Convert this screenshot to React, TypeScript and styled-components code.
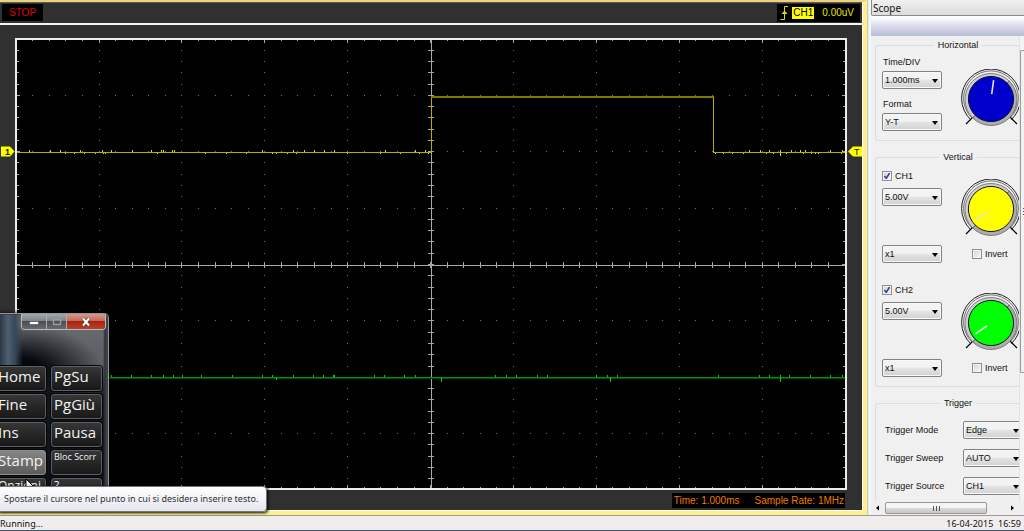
import React from 'react';
import styled, { createGlobalStyle } from 'styled-components';

const Global = createGlobalStyle`
  * { box-sizing: border-box; }
  body { margin: 0; background: #f0f0f0; overflow: hidden; }
`;

const arial = `"Liberation Sans", Arial, sans-serif`;
const segoe = `"Open Sans", "Segoe UI", sans-serif`;
const tahoma = `"Noto Sans", Tahoma, sans-serif`;

const Desktop = styled.div`
  position: relative;
  display: flex;
  flex-direction: column;
  height: 100vh;
  overflow: hidden;
  font-family: ${arial};
`;

const Main = styled.main`
  display: flex;
  flex: 1;
  min-height: 0;
`;

/* ---------- oscilloscope ---------- */

const Scope = styled.section`
  display: flex;
  flex-direction: column;
  flex: 1;
  min-width: 0;
  background: #303030;
  border: solid #fff08a;
  border-width: 2px 4px 4px 0;
  border-top-color: #ecd27e;
  box-shadow: inset -1px -1px 0 #fff, inset 0 1px 0 #5a5a5a;
`;

const Gutter = styled.div`
  flex: none;
  width: 4px;
  background: linear-gradient(90deg, #c9c9c4 0 1px, #e4ebf2 1px 2px, #f2f7fc 2px);
`;

const ScopeHeader = styled.header`
  display: flex;
  justify-content: space-between;
  align-items: center;
  height: 23px;
  margin-right: 1px;
  padding: 0 2px;
  border-bottom: 2px solid #f4f4f4;
  font-size: 10px;
`;

const StopBox = styled.div`
  padding: 0 7px;
  background: #000;
  color: #e00000;
  line-height: 17px;
`;

const TriggerBox = styled.div`
  display: flex;
  align-items: center;
  height: 18px;
  padding: 0 6px 0 3px;
  background: #000;
  color: #e6e600;
`;

const ChannelTag = styled.span`
  margin: 0 8px 0 3px;
  padding: 0 1px;
  background: #ffff00;
  color: #000;
  line-height: 12px;
`;

const PlotRow = styled.div`
  display: flex;
  flex: 1;
  min-height: 0;
  margin-top: 13px;
`;

const PlotGutter = styled.div<{ $width: number }>`
  position: relative;
  flex: none;
  width: ${(p) => p.$width}px;
`;

const Flag = styled.svg`
  position: absolute;
  top: 24%;
  left: 1px;
  width: 14px;
  height: 11px;
`;

const Plot = styled.div`
  flex: 1;
  min-width: 0;
  border: 2px solid #ececec;
  background: #000;
  svg { display: block; width: 100%; height: 100%; }
`;

const ScopeFooter = styled.footer`
  display: flex;
  justify-content: flex-end;
  align-items: flex-start;
  height: 21px;
  padding: 3px 18px 0 0;
`;

const Readout = styled.div`
  display: flex;
  gap: 15px;
  padding: 0 1px 0 2px;
  background: #000;
  color: #f07800;
  font-size: 10px;
  line-height: 15px;
`;

/* ---------- control panel ---------- */

const Side = styled.aside`
  display: flex;
  flex-direction: column;
  flex: none;
  width: 153px;
  overflow: hidden;
  background: #f0f0f0;
  font-size: 9px;
  color: #101010;
`;

const ModeSelect = styled.select`
  appearance: none;
  flex: none;
  width: 160px;
  height: 16px;
  padding: 0 1px;
  border: 1px solid #8a8a8a;
  border-top: 0;
  border-radius: 0 0 2px 2px;
  background: linear-gradient(#f0f0f0, #dcdcdc);
  color: #101010;
  font: 10px/14px ${tahoma};
`;

const Band = styled.div`
  flex: none;
  height: 20px;
  background: linear-gradient(#fafbfd 0 3px, #e8eaf3 6px, #b9bdd6);
`;

const PanelRow = styled.div`
  display: flex;
  flex: 1;
  min-height: 0;
`;

const PanelView = styled.div`
  flex: 1;
  min-width: 0;
  overflow: hidden;
  padding: 3px 0 0 4px;
`;

const Group = styled.fieldset`
  width: 166px;
  margin: 0 0 10px;
  padding: 5px 6px 9px;
  border: 1px solid #d5dfe5;
  border-radius: 3px;
`;

const Legend = styled.legend`
  margin: 0 auto;
  padding: 0 4px;
  line-height: 12px;
`;

const Row = styled.div<{ $gap: number }>`
  display: flex;
  align-items: center;
  gap: ${(p) => p.$gap}px;
`;

const Stack = styled.div`
  display: flex;
  flex-direction: column;
  flex: none;
  width: 60px;
`;

const Caption = styled.label`
  padding: 0 1px;
  line-height: 12px;
`;

const SelectBox = styled.span`
  position: relative;
  display: block;
  flex: none;
  width: 60px;
  height: 18px;
  &::after {
    content: '';
    position: absolute;
    right: 4px;
    top: 8px;
    border: solid transparent;
    border-width: 4px 3px 0;
    border-top-color: #000;
    pointer-events: none;
  }
`;

const NativeSelect = styled.select`
  appearance: none;
  display: block;
  width: 100%;
  height: 100%;
  padding: 0 2px;
  border: 1px solid #828282;
  border-radius: 2px;
  background: linear-gradient(#f3f3f3 0 45%, #e4e4e4 50%, #d2d2d2);
  box-shadow: inset 0 0 0 1px #f8f8f8;
  color: #101010;
  font: 9px ${arial};
`;

const CaptionedSelect = styled.div`
  display: flex;
  flex-direction: column;
  gap: 3px;
  & + & { margin-top: 9px; }
`;

const CheckLabel = styled.label`
  display: flex;
  align-items: center;
  gap: 3px;
  height: 12px;
`;

const CheckBox = styled.input`
  appearance: none;
  width: 10px;
  height: 10px;
  margin: 0;
  border: 1px solid #8c8f94;
  background: linear-gradient(135deg, #cdd3da, #f8f9fa);
  box-shadow: inset 0 0 0 1px #f2f2f2;
  &:checked {
    background: url("data:image/svg+xml,%3Csvg xmlns='http://www.w3.org/2000/svg' viewBox='0 0 8 8'%3E%3Cpath d='M1.4 4 L3.2 6.4 L6.6 1' fill='none' stroke='%23303f8f' stroke-width='1.5'/%3E%3C/svg%3E"),
      linear-gradient(135deg, #cdd3da, #f8f9fa);
  }
`;

const Channel = styled.div`
  padding-top: 2px;
  & + & { padding-top: 21px; }
`;

const ChannelTop = styled.div`
  display: flex;
  gap: 18px;
  margin-bottom: 6px;
`;

const ChannelControls = styled.div`
  display: flex;
  flex-direction: column;
  gap: 6px;
  width: 60px;
`;

const KnobSvg = styled.svg<{ $top: number }>`
  flex: none;
  width: 62px;
  height: 60px;
  margin-top: ${(p) => p.$top}px;
`;

const TriggerList = styled.div`
  display: flex;
  flex-direction: column;
  gap: 10px;
  padding: 7px 0 10px 3px;
`;

const TriggerRow = styled.div`
  display: flex;
  align-items: center;
`;

const TriggerLabel = styled.label`
  flex: none;
  width: 78px;
`;

const VScroll = styled.div`
  flex: none;
  width: 5px;
  padding-top: 14px;
  border-left: 1px solid #e2e2e2;
  background: #f4f4f4;
`;

const VThumb = styled.div`
  display: flex;
  align-items: center;
  height: 323px;
  border: 1px solid #9a9a9a;
  border-right: 0;
  border-radius: 2px 0 0 2px;
  background: #f2f2f2;
  &::after {
    content: '';
    width: 2px;
    height: 7px;
    margin-left: 2px;
    background: repeating-linear-gradient(#555 0 1px, transparent 1px 3px);
  }
`;

const HScroll = styled.div`
  display: flex;
  align-items: center;
  flex: none;
  height: 14px;
  padding: 0 9px 0 4px;
  gap: 5px;
  background: #efefef;
  svg { width: 5px; height: 6px; }
  svg:last-child { margin-left: auto; }
`;

const HThumb = styled.div`
  display: flex;
  justify-content: center;
  align-items: center;
  width: 102px;
  height: 12px;
  border: 1px solid #979797;
  border-radius: 2px;
  background: linear-gradient(#f6f6f6 0 45%, #dadada 50%, #c8c8c8);
  &::after {
    content: '';
    width: 7px;
    height: 5px;
    background: repeating-linear-gradient(90deg, #555 0 1px, transparent 1px 3px);
  }
`;

/* ---------- status bar ---------- */

const StatusBar = styled.footer`
  display: flex;
  justify-content: space-between;
  flex: none;
  height: 16px;
  padding: 0 3px 0 0;
  border-top: 1px solid #9a9a9a;
  border-bottom: 1px solid #40566e;
  background: #f1edec;
  color: #101010;
  font: 9px/16px ${tahoma};
  white-space: pre;
`;

/* ---------- on-screen keyboard ---------- */

const KeyboardWindow = styled.section`
  position: absolute;
  left: 0;
  bottom: 22px;
  width: 109px;
  height: 196px;
  overflow: hidden;
  border: 1px solid #8f9499;
  border-left: 0;
  border-radius: 0 5px 0 0;
  box-shadow: 0 0 4px #000, inset -1px 1px 0 #3c4146;
  background:
    linear-gradient(90deg, #2b3745 0, #4d5f70 8px, #35485a 15px, rgba(20, 28, 38, 0) 23px) 0 0 / 24px 52px no-repeat,
    linear-gradient(90deg, rgba(0, 0, 0, 0) 103px, #2c3136 105px, #50565b 108px),
    radial-gradient(ellipse 80px 45px at 22px 56px, #05080c 25%, rgba(10, 14, 18, 0) 100%),
    linear-gradient(#6a6e72 0, #5b5f63 50px, #15191e 85px, #0a0f16);
`;

const TitleButtons = styled.div`
  display: flex;
  width: 85px;
  height: 16px;
  margin-left: 21px;
  border: 1px solid #b8bcc0;
  border-top: 0;
  border-radius: 0 0 4px 4px;
  overflow: hidden;
`;

const TitleButton = styled.button<{ $width: number; $close?: boolean }>`
  display: flex;
  justify-content: center;
  align-items: center;
  width: ${(p) => p.$width}px;
  padding: 0;
  border: 0;
  border-left: ${(p) => (p.$width === 24 ? '0' : '1px solid #a8acb0')};
  background: ${(p) =>
    p.$close
      ? 'linear-gradient(#d59a8c, #c46a58 45%, #a82411 50%, #b8402a)'
      : 'linear-gradient(#a4a7aa, #808488 45%, #4a4e52 50%, #666a6e)'};
  svg { width: 12px; height: 10px; }
`;

const Keys = styled.div`
  display: grid;
  grid-template-columns: 51px 51px;
  gap: 3px 5px;
  margin: 36px 0 0 -5px;
`;

const keyText = {
  large: 'font-size: 15px; line-height: 18px;',
  medium: 'font-size: 12px; line-height: 14px;',
  small: 'font-size: 9px; line-height: 12px;',
};

const Key = styled.button<{ $size: keyof typeof keyText; $lit: boolean }>`
  display: flex;
  align-items: flex-start;
  height: 25px;
  padding: 0 0 0 2px;
  border: 1px solid ${(p) => (p.$lit ? '#8e8e8e' : '#5c5f62')};
  border-radius: 3px;
  background: ${(p) =>
    p.$lit ? 'linear-gradient(#858585, #5c5c5c)' : 'linear-gradient(#363636, #262626 50%, #191919)'};
  box-shadow: 0 0 0 1px #05070a;
  color: #f2f2f2;
  font-family: ${segoe};
  ${(p) => keyText[p.$size]}
  white-space: nowrap;
`;

const Cursor = styled.svg`
  position: absolute;
  left: 25px;
  bottom: 35px;
  width: 12px;
  height: 18px;
`;

const Tooltip = styled.div`
  position: absolute;
  left: -4px;
  bottom: 19px;
  padding: 0 8px 0 7px;
  border: 1px solid #767676;
  border-radius: 4px;
  background: linear-gradient(#ffffff, #e4e5f0);
  box-shadow: 1px 1px 3px #000;
  color: #303030;
  font: 9px/24px ${tahoma};
  white-space: nowrap;
`;

/* ---------- pieces ---------- */

const X0 = 16.6;
const Y0 = 39.4;
const DX = 82.9;
const DY = 56.4;
const range = (n: number) => Array.from({ length: n }, (_, i) => i);

const YELLOW_UP = [29, 50, 60, 80, 102, 111, 132, 151, 161, 163, 172, 174, 262, 293, 304, 314, 324, 334, 385, 415, 425,
  749, 760, 769, 780, 791, 800, 805, 830, 842];
const YELLOW_DOWN = [65, 74, 84, 95, 103, 105, 157, 205, 226, 246, 272, 276, 287, 296, 347, 380, 400, 419, 428, 715, 723,
  732, 743, 766, 773, 780, 786, 803, 811, 815, 818, 841];
const GREEN_UP = [111, 131, 151, 163, 173, 182, 201, 232, 262, 272, 293, 313, 323, 333, 334, 374, 384, 404, 415, 495, 506,
  516, 537, 547, 596, 607, 617, 718, 759, 769, 780, 789, 810, 830, 842];
const GREEN_DOWN = [[276, 2], [441, 4], [610, 4], [780, 4]];

function Graticule() {
  return (
    <svg viewBox="17 40 828 448" preserveAspectRatio="none" role="img" aria-label="Waveforms of channel 1 and channel 2">
      <g fill="#707070">
        {range(9).map((c) =>
          range(39).map((r) => (
            <rect key={`v${c}-${r}`} x={Math.round(X0 + DX * (c + 1)) - 1} y={Math.round(Y0 + (DY / 5) * (r + 1)) - 1} width="1" height="1" />
          )),
        )}
        {range(7).map((r) =>
          range(49).map((c) => (
            <rect key={`h${r}-${c}`} x={Math.round(X0 + (DX / 5) * (c + 1)) - 1} y={Math.round(Y0 + DY * (r + 1)) - 1} width="1" height="1" />
          )),
        )}
      </g>
      <g fill="#a8a8a8">
        {range(49).map((c) => {
          const x = Math.round(X0 + (DX / 5) * (c + 1)) - 1;
          const len = (c + 1) % 5 === 0 ? 3 : 1;
          return (
            <React.Fragment key={c}>
              <rect x={x} y={40} width="1" height={len} />
              <rect x={x} y={488 - len} width="1" height={len} />
              <rect x={x} y={262} width="1" height="6" />
            </React.Fragment>
          );
        })}
        {range(39).map((r) => {
          const y = Math.round(Y0 + (DY / 5) * (r + 1)) - 1;
          const len = (r + 1) % 5 === 0 ? 3 : 2;
          return (
            <React.Fragment key={r}>
              <rect x={17} y={y} width={len} height="1" />
              <rect x={845 - len} y={y} width={len} height="1" />
              <rect x={428} y={y} width="6" height="1" />
            </React.Fragment>
          );
        })}
        <rect x={431} y={40} width="1" height="448" />
        <rect x={17} y={265} width="828" height="1" />
      </g>
      <g fill="#b4b000">
        <rect x={17} y={152} width="415" height="1" />
        <rect x={431} y={97} width="1" height="56" />
        <rect x={431} y={96} width="283" height="2" fill="#7d7800" />
        <rect x={713} y={97} width="1" height="56" />
        <rect x={713} y={152} width="132" height="1" />
      </g>
      <g fill="#e0dc00">
        {YELLOW_UP.map((x) => <rect key={x} x={x} y={150} width="1" height="2" />)}
        {YELLOW_DOWN.map((x) => <rect key={x} x={x} y={153} width="1" height={x === 780 ? 3 : 1} />)}
      </g>
      <rect x={17} y={377} width="828" height="1" fill="#009800" />
      <rect x={17} y={378} width="828" height="1" fill="#004a00" />
      <g fill="#00d800">
        {GREEN_UP.map((x) => <rect key={x} x={x} y={375} width="1" height="2" />)}
        {GREEN_DOWN.map(([x, h]) => <rect key={x} x={x} y={378} width="1" height={h} />)}
      </g>
    </svg>
  );
}

function Knob({ color, angle, top = 0 }: { color: string; angle: number; top?: number }) {
  return (
    <KnobSvg $top={top} viewBox="0 0 62 60" aria-hidden="true">
      <g fill="none" stroke="#202020">
        <path d="M10.5 50.5 A29.4 29.4 0 1 1 51.5 50.5" />
        <path d="M12 49 A27.4 27.4 0 1 1 50 49" stroke="#505050" strokeWidth="0.8" />
        <path d="M6 55 L13 48 M57 55 L50 48" stroke="#000" strokeWidth="1.2" />
      </g>
      <circle cx="31" cy="30.5" r="26" fill="#cfcfcf" />
      <path d="M49.4 12.1 A26 26 0 0 1 12.6 48.9 Z" fill="#adadad" />
      <circle cx="31" cy="30.5" r="26" fill="none" stroke="#666" strokeWidth="0.8" />
      <path d="M45 16 L49.4 12.1 M17 45 L12.6 48.9" stroke="#333" strokeWidth="0.8" />
      <circle cx="31" cy="30" r="22.6" fill={color} stroke="#101030" />
      <path d="M31 25 V11" transform={`rotate(${angle} 31 30)`} stroke="#e4e4e4" strokeWidth="1.6" />
    </KnobSvg>
  );
}

function Select({ id, value, label }: { id: string; value: string; label?: string }) {
  return (
    <SelectBox>
      <NativeSelect id={id} aria-label={label} defaultValue={value}>
        <option>{value}</option>
      </NativeSelect>
    </SelectBox>
  );
}

function ChannelBlock({ name, color }: { name: string; color: string }) {
  return (
    <Channel>
      <ChannelTop>
        <ChannelControls>
          <CheckLabel>
            <CheckBox type="checkbox" defaultChecked />
            {name}
          </CheckLabel>
          <Select id={`${name}-volts`} value="5.00V" label={`${name} volts per division`} />
        </ChannelControls>
        <Knob color={color} angle={235} top={9} />
      </ChannelTop>
      <Row $gap={30}>
        <Select id={`${name}-probe`} value="x1" label={`${name} probe`} />
        <CheckLabel>
          <CheckBox type="checkbox" />
          Invert
        </CheckLabel>
      </Row>
    </Channel>
  );
}

const KEYS = ['Home', 'PgSu', 'Fine', 'PgGiù', 'Ins', 'Pausa', 'Stamp', 'Bloc Scorr', 'Opzioni', '?'];
const keySize = (k: string) => (k === 'Bloc Scorr' ? 'small' : k === 'Opzioni' || k === '?' ? 'medium' : 'large');

const TRIGGERS = [
  ['Trigger Mode', 'Edge'],
  ['Trigger Sweep', 'AUTO'],
  ['Trigger Source', 'CH1'],
];

export default function App() {
  return (
    <Desktop>
      <Global />
      <Main>
        <Scope>
          <ScopeHeader>
            <StopBox>STOP</StopBox>
            <TriggerBox>
              <svg width="9" height="14" viewBox="0 0 9 14" fill="none" stroke="#d8d820" aria-hidden="true">
                <path d="M0.5 13.5 H4.5 V0.5 H8" />
                <path d="M1.5 8 L4.5 4.5 L7.5 8 Z" fill="#d8d820" stroke="none" />
              </svg>
              <ChannelTag>CH1</ChannelTag>
              0.00uV
            </TriggerBox>
          </ScopeHeader>
          <PlotRow>
            <PlotGutter $width={15}>
              <Flag viewBox="0 0 14 11">
                <path d="M0 0.5 H9 L13.5 5.5 L9 10.5 H0 Z" fill="#ffff00" />
                <text x="4" y="9" fontSize="9" fontWeight="700" fill="#202000">1</text>
              </Flag>
            </PlotGutter>
            <Plot>
              <Graticule />
            </Plot>
            <PlotGutter $width={16}>
              <Flag viewBox="0 0 14 11">
                <path d="M14 0.5 H5 L0 5.5 L5 10.5 H14 Z" fill="#ffff00" />
                <text x="6" y="9" fontSize="9" fill="#202000">T</text>
              </Flag>
            </PlotGutter>
          </PlotRow>
          <ScopeFooter>
            <Readout>
              <span>Time: 1.000ms</span>
              <span>Sample Rate: 1MHz</span>
            </Readout>
          </ScopeFooter>
        </Scope>
        <Gutter />
        <Side>
          <ModeSelect aria-label="Instrument" defaultValue="Scope">
            <option>Scope</option>
          </ModeSelect>
          <Band />
          <PanelRow>
            <PanelView>
              <Group>
                <Legend>Horizontal</Legend>
                <Row $gap={18}>
                  <Stack>
                    <CaptionedSelect>
                      <Caption htmlFor="time-div">Time/DIV</Caption>
                      <Select id="time-div" value="1.000ms" />
                    </CaptionedSelect>
                    <CaptionedSelect>
                      <Caption htmlFor="format">Format</Caption>
                      <Select id="format" value="Y-T" />
                    </CaptionedSelect>
                  </Stack>
                  <Knob color="#0000cc" angle={8} top={11} />
                </Row>
              </Group>
              <Group>
                <Legend>Vertical</Legend>
                <ChannelBlock name="CH1" color="#ffff00" />
                <ChannelBlock name="CH2" color="#00ff00" />
              </Group>
              <Group>
                <Legend>Trigger</Legend>
                <TriggerList>
                  {TRIGGERS.map(([label, value]) => (
                    <TriggerRow key={label}>
                      <TriggerLabel htmlFor={label.replace(' ', '-')}>{label}</TriggerLabel>
                      <Select id={label.replace(' ', '-')} value={value} />
                    </TriggerRow>
                  ))}
                </TriggerList>
              </Group>
            </PanelView>
            <VScroll>
              <VThumb />
            </VScroll>
          </PanelRow>
          <HScroll>
            <svg viewBox="0 0 5 6"><path d="M4 0.5 V5.5 L1 3 Z" /></svg>
            <HThumb />
            <svg viewBox="0 0 5 6"><path d="M1 0.5 V5.5 L4 3 Z" /></svg>
          </HScroll>
        </Side>
      </Main>
      <StatusBar>
        <span>Running...</span>
        <span>16-04-2015  16:59</span>
      </StatusBar>
      <KeyboardWindow aria-label="On-screen keyboard">
        <TitleButtons>
          <TitleButton $width={24} aria-label="Minimize">
            <svg viewBox="0 0 12 10"><rect x="1.5" y="4.5" width="9" height="3" fill="#fff" stroke="#444" strokeWidth="0.6" /></svg>
          </TitleButton>
          <TitleButton $width={21} aria-label="Maximize">
            <svg viewBox="0 0 12 10"><rect x="2.5" y="2.5" width="7" height="5" fill="none" stroke="#9a9da0" strokeWidth="1.4" /></svg>
          </TitleButton>
          <TitleButton $width={39} $close aria-label="Close">
            <svg viewBox="0 0 12 10">
              <path d="M3 1.5 L9 8.5 M9 1.5 L3 8.5" stroke="#4a3a4a" strokeWidth="3.4" />
              <path d="M3 1.5 L9 8.5 M9 1.5 L3 8.5" stroke="#fff" strokeWidth="2" />
            </svg>
          </TitleButton>
        </TitleButtons>
        <Keys>
          {KEYS.map((k) => (
            <Key key={k} $size={keySize(k)} $lit={k === 'Stamp'}>{k}</Key>
          ))}
        </Keys>
      </KeyboardWindow>
      <Cursor viewBox="0 0 12 18">
        <path d="M1 1 V14.5 L4.2 11.6 L6.4 16.6 L8.6 15.6 L6.4 10.8 H10.8 Z" fill="#fff" stroke="#000" />
      </Cursor>
      <Tooltip role="tooltip">Spostare il cursore nel punto in cui si desidera inserire testo.</Tooltip>
    </Desktop>
  );
}
